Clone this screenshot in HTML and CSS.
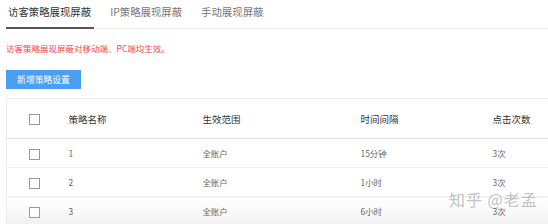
FILE: index.html
```html
<!DOCTYPE html>
<html lang="zh-CN">
<head>
<meta charset="utf-8">
<link rel="stylesheet" href="styles.css">
</head>
<body>
<div class="page">
  <div class="tabs">
    <div class="tab active">访客策略展现屏蔽</div>
    <div class="tab">IP策略展现屏蔽</div>
    <div class="tab">手动展现屏蔽</div>
  </div>
  <div class="notice">访客策略展现屏蔽对移动端、PC端均生效。</div>
  <button class="btn">新增策略设置</button>
  <table class="grid">
    <colgroup>
      <col class="c1"><col class="c2"><col class="c3"><col class="c4"><col class="c5">
    </colgroup>
    <thead>
      <tr>
        <th class="chk"><span class="box"></span></th>
        <th>策略名称</th>
        <th>生效范围</th>
        <th>时间间隔</th>
        <th>点击次数</th>
      </tr>
    </thead>
    <tbody>
      <tr>
        <td class="chk"><span class="box"></span></td>
        <td>1</td><td>全账户</td><td>15分钟</td><td>3次</td>
      </tr>
      <tr>
        <td class="chk"><span class="box"></span></td>
        <td>2</td><td>全账户</td><td>1小时</td><td>3次</td>
      </tr>
      <tr class="last">
        <td class="chk"><span class="box"></span></td>
        <td>3</td><td>全账户</td><td>6小时</td><td>3次</td>
      </tr>
    </tbody>
  </table>
  <div class="watermark">知乎 @老孟</div>
</div>
</body>
</html>
```
FILE: styles.css
```css
* { box-sizing: border-box; }
html, body { margin: 0; padding: 0; background: #fff; }
body {
  font-family: "Noto Sans CJK SC", "Noto Sans", sans-serif;
  color: #666;
  overflow: hidden;
  height: 224px;
}
.page {
  position: relative;
  padding: 0 0 0 6px;
  height: 224px;
}
.tabs {
  display: flex;
  gap: 14px;
  border-bottom: 1px solid #ececec;
  height: 29px;
}
.tab {
  font-size: 10.4px;
  line-height: 24px;
  height: 28px;
  padding: 0 3px 0 2px;
  color: #777;
  white-space: nowrap;
}
.tab.active {
  color: #333;
  border-bottom: 2px solid #555;
  height: 29px;
  margin-bottom: -1px;
}
.notice {
  margin-top: 12px;
  font-size: 8.5px;
  line-height: 14px;
  color: #f5484a;
}
.btn {
  display: block;
  margin-top: 15px;
  width: 75px;
  height: 19px;
  border: none;
  padding: 0;
  background: #4a9ff5;
  color: #fff;
  font-family: inherit;
  font-size: 8.8px;
  line-height: 19px;
}
.grid {
  margin-top: 9px;
  width: 542px;
  table-layout: fixed;
  border-collapse: collapse;
  border-top: 1px solid #ececec;
  border-left: 1px solid #ececec;
}
.c1 { width: 56px; }
.c2 { width: 134px; }
.c3 { width: 158px; }
.c4 { width: 132px; }
.c5 { width: 62px; }
.grid th, .grid td {
  text-align: left;
  padding: 0 0 0 6px;
  white-space: nowrap;
}
.grid th {
  height: 40px;
  font-size: 9.5px;
  font-weight: normal;
  color: #333;
  border-bottom: 1px solid #e3e3e3;
}
.grid td {
  height: 29px;
  font-size: 8.4px;
  color: #666;
  border-bottom: 1px solid #efefef;
}
.grid .chk {
  text-align: center;
  padding: 0;
}
.box {
  display: inline-block;
  width: 11px;
  height: 11px;
  border: 1px solid #9a9a9a;
  background: #fff;
  vertical-align: middle;
}
.grid tr.last td {
  border-bottom: none;
  background: linear-gradient(#fff 0%, #f7f7f7 60%, #eeeeee 100%);
}
.watermark {
  position: absolute;
  left: 449px;
  top: 188px;
  font-size: 16px;
  line-height: 22px;
  color: rgba(140, 140, 140, 0.55);
  letter-spacing: 1px;
  white-space: nowrap;
}
```
